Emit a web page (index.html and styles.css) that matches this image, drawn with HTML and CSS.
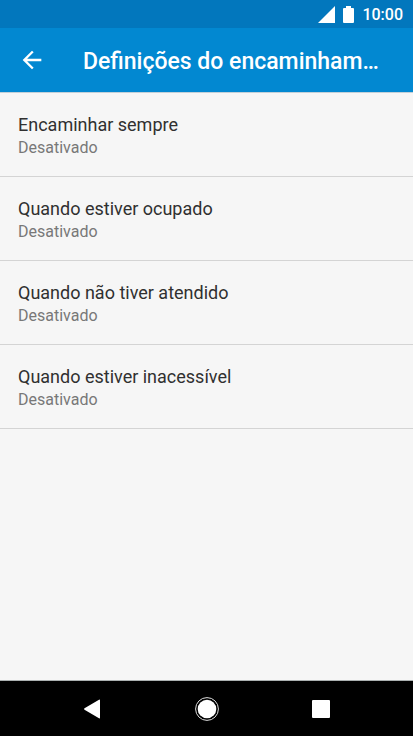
FILE: index.html
```html
<!DOCTYPE html>
<html lang="pt">
<head>
  <meta charset="UTF-8" />
  <meta name="viewport" content="width=device-width, initial-scale=1.0" />
  <title>Definições do encaminhamento</title>
  <link rel="stylesheet" href="styles.css">
</head>
<body>
  <div class="status-bar">
    <svg width="17" height="17" viewBox="0 0 17 17"><path d="M17 0V17H0Z" /></svg>
    <svg width="11" height="17" viewBox="0 0 11 17"><path d="M3 0h5v2h2q1 0 1 1v13q0 1-1 1H1q-1 0-1-1V3q0-1 1-1h2z" /></svg>
    <span class="clock">10:00</span>
  </div>

  <header class="app-bar">
    <button class="back" type="button" aria-label="Voltar">
      <svg width="28" height="28" viewBox="0 0 24 24"><path d="M20 11H7.830l5.590-5.590L12 4l-8 8 8 8 1.410-1.410L7.830 13H20v-2z" /></svg>
    </button>
    <h1>Definições do encaminham…</h1>
  </header>

  <main>
    <ul class="settings">
      <li><a href="#sempre"><span class="name">Encaminhar sempre</span><span class="state">Desativado</span></a></li>
      <li><a href="#ocupado"><span class="name">Quando estiver ocupado</span><span class="state">Desativado</span></a></li>
      <li><a href="#atendido"><span class="name">Quando não tiver atendido</span><span class="state">Desativado</span></a></li>
      <li><a href="#inacessivel"><span class="name">Quando estiver inacessível</span><span class="state">Desativado</span></a></li>
    </ul>
  </main>

  <nav class="nav-bar">
    <button type="button" aria-label="Retroceder">
      <svg width="26" height="26" viewBox="0 0 26 26"><path d="M20 4.500v17q0 1.300-1 .700L4.500 13.700q-1-.700 0-1.400L19 3.800q1-.600 1 .700z" /></svg>
    </button>
    <button type="button" aria-label="Início">
      <svg width="26" height="26" viewBox="0 0 26 26"><circle cx="13" cy="13" r="9.300" /><circle class="ring" cx="13" cy="13" r="11.400" /></svg>
    </button>
    <button type="button" aria-label="Recentes">
      <svg width="26" height="26" viewBox="0 0 26 26"><rect x="4" y="4" width="18" height="18" rx="1" /></svg>
    </button>
  </nav>
</body>
</html>
```

FILE: styles.css
```css
* {
  box-sizing: border-box;
}
body {
  margin: 0;
  min-height: 100vh;
  display: flex;
  flex-direction: column;
  font-family: Roboto, "Noto Sans", sans-serif;
  background: #f6f6f6;
  color: #303030;
}
svg {
  display: block;
  fill: #fff;
}
button {
  padding: 0;
  border: none;
  background: none;
  cursor: pointer;
}
.status-bar {
  display: flex;
  align-items: center;
  justify-content: flex-end;
  gap: 8px;
  height: 28px;
  padding-right: 10px;
  background: #0277bd;
}
.clock {
  color: #fff;
  font-size: 16px;
  font-weight: 500;
}
.app-bar {
  display: flex;
  align-items: center;
  height: 65px;
  padding: 0 28px 0 18px;
  gap: 37px;
  background: #0288d1;
  border-bottom: 1px solid #c3d0d8;
}
.app-bar h1 {
  flex: 1;
  min-width: 0;
  margin: 0;
  padding-top: 2px;
  overflow: hidden;
  white-space: nowrap;
  text-overflow: ellipsis;
  color: #fff;
  font-size: 23px;
  font-weight: 500;
}
main {
  flex: 1;
}
.settings {
  margin: 0;
  padding: 0;
  list-style: none;
}
.settings a {
  display: block;
  padding: 19px 18px 17px;
  border-bottom: 1px solid #d4d4d4;
  color: inherit;
  text-decoration: none;
}
.name,
.state {
  display: block;
}
.name {
  font-size: 18px;
  line-height: 25px;
}
.state {
  color: #787878;
  font-size: 16px;
  line-height: 22px;
}
.nav-bar {
  display: flex;
  align-items: center;
  justify-content: center;
  gap: 88px;
  height: 56px;
  background: #000;
  border-top: 1px solid #aab0b0;
}
.ring {
  fill: none;
  stroke: #ddd;
}
```
